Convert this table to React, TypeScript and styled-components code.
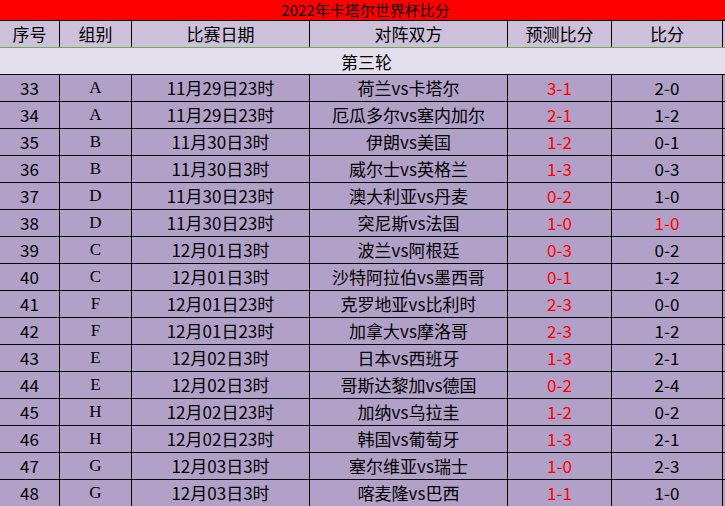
import React from "react";
import styled, { createGlobalStyle } from "styled-components";

const GlobalStyle = createGlobalStyle`
  html, body {
    margin: 0;
    padding: 0;
    background: #ffffff;
    overflow: hidden;
  }
  body {
    font-family: "Noto Sans CJK SC", "Liberation Sans", sans-serif;
  }
`;

type Match = {
  no: number;
  group: string;
  date: string;
  teams: string;
  guess: string;
  score: string;
  scoreRed?: boolean;
};

const matches: Match[] = [
  { no: 33, group: "A", date: "11月29日23时", teams: "荷兰vs卡塔尔", guess: "3-1", score: "2-0" },
  { no: 34, group: "A", date: "11月29日23时", teams: "厄瓜多尔vs塞内加尔", guess: "2-1", score: "1-2" },
  { no: 35, group: "B", date: "11月30日3时", teams: "伊朗vs美国", guess: "1-2", score: "0-1" },
  { no: 36, group: "B", date: "11月30日3时", teams: "威尔士vs英格兰", guess: "1-3", score: "0-3" },
  { no: 37, group: "D", date: "11月30日23时", teams: "澳大利亚vs丹麦", guess: "0-2", score: "1-0" },
  { no: 38, group: "D", date: "11月30日23时", teams: "突尼斯vs法国", guess: "1-0", score: "1-0", scoreRed: true },
  { no: 39, group: "C", date: "12月01日3时", teams: "波兰vs阿根廷", guess: "0-3", score: "0-2" },
  { no: 40, group: "C", date: "12月01日3时", teams: "沙特阿拉伯vs墨西哥", guess: "0-1", score: "1-2" },
  { no: 41, group: "F", date: "12月01日23时", teams: "克罗地亚vs比利时", guess: "2-3", score: "0-0" },
  { no: 42, group: "F", date: "12月01日23时", teams: "加拿大vs摩洛哥", guess: "2-3", score: "1-2" },
  { no: 43, group: "E", date: "12月02日3时", teams: "日本vs西班牙", guess: "1-3", score: "2-1" },
  { no: 44, group: "E", date: "12月02日3时", teams: "哥斯达黎加vs德国", guess: "0-2", score: "2-4" },
  { no: 45, group: "H", date: "12月02日23时", teams: "加纳vs乌拉圭", guess: "1-2", score: "0-2" },
  { no: 46, group: "H", date: "12月02日23时", teams: "韩国vs葡萄牙", guess: "1-3", score: "2-1" },
  { no: 47, group: "G", date: "12月03日3时", teams: "塞尔维亚vs瑞士", guess: "1-0", score: "2-3" },
  { no: 48, group: "G", date: "12月03日3时", teams: "喀麦隆vs巴西", guess: "1-1", score: "1-0" },
];

const Sheet = styled.div`
  width: 725px;
  height: 506px;
  overflow: hidden;
  display: flex;
  flex-direction: column;
  color: #000000;
`;

const Title = styled.div`
  height: 20px;
  flex: none;
  background: #ff0000;
  text-align: center;
  font-size: 15px;
  line-height: 20px;
  padding-left: 6px;
`;

const Row = styled.div<{ $bg: string; $line?: string }>`
  display: grid;
  grid-template-columns: 60px 72px 178px 198px 104px 111px 1fr;
  height: 27px;
  flex: none;
  box-sizing: border-box;
  border-top: 1px solid ${(p) => p.$line ?? "#000000"};
  background: ${(p) => p.$bg};
`;

const Cell = styled.div<{ $red?: boolean; $last?: boolean }>`
  display: flex;
  align-items: center;
  justify-content: center;
  box-sizing: border-box;
  border-right: ${(p) => (p.$last ? "none" : "1px solid #000000")};
  font-size: 17px;
  line-height: 26px;
  white-space: nowrap;
  color: ${(p) => (p.$red ? "#ff0000" : "#000000")};
`;

const Letter = styled.span`
  font-family: "Liberation Serif", "Noto Sans CJK SC", serif;
  font-size: 17px;
`;

const RoundRow = styled.div`
  height: 27px;
  flex: none;
  box-sizing: border-box;
  border-top: 1px solid #70ad47;
  background: #e4dfec;
  display: flex;
  align-items: center;
  justify-content: center;
  font-size: 17px;
  padding-left: 8px;
`;

const headers = ["序号", "组别", "比赛日期", "对阵双方", "预测比分", "比分"];

export default function App() {
  return (
    <>
      <GlobalStyle />
      <Sheet>
        <Title>2022年卡塔尔世界杯比分</Title>
        <Row $bg="#ccc0da">
          {headers.map((h) => (
            <Cell key={h}>{h}</Cell>
          ))}
          <Cell $last />
        </Row>
        <RoundRow>第三轮</RoundRow>
        {matches.map((m) => (
          <Row key={m.no} $bg="#b1a0c7">
            <Cell>{m.no}</Cell>
            <Cell>
              <Letter>{m.group}</Letter>
            </Cell>
            <Cell>{m.date}</Cell>
            <Cell>{m.teams}</Cell>
            <Cell $red>{m.guess}</Cell>
            <Cell $red={m.scoreRed}>{m.score}</Cell>
            <Cell $last />
          </Row>
        ))}
      </Sheet>
    </>
  );
}
